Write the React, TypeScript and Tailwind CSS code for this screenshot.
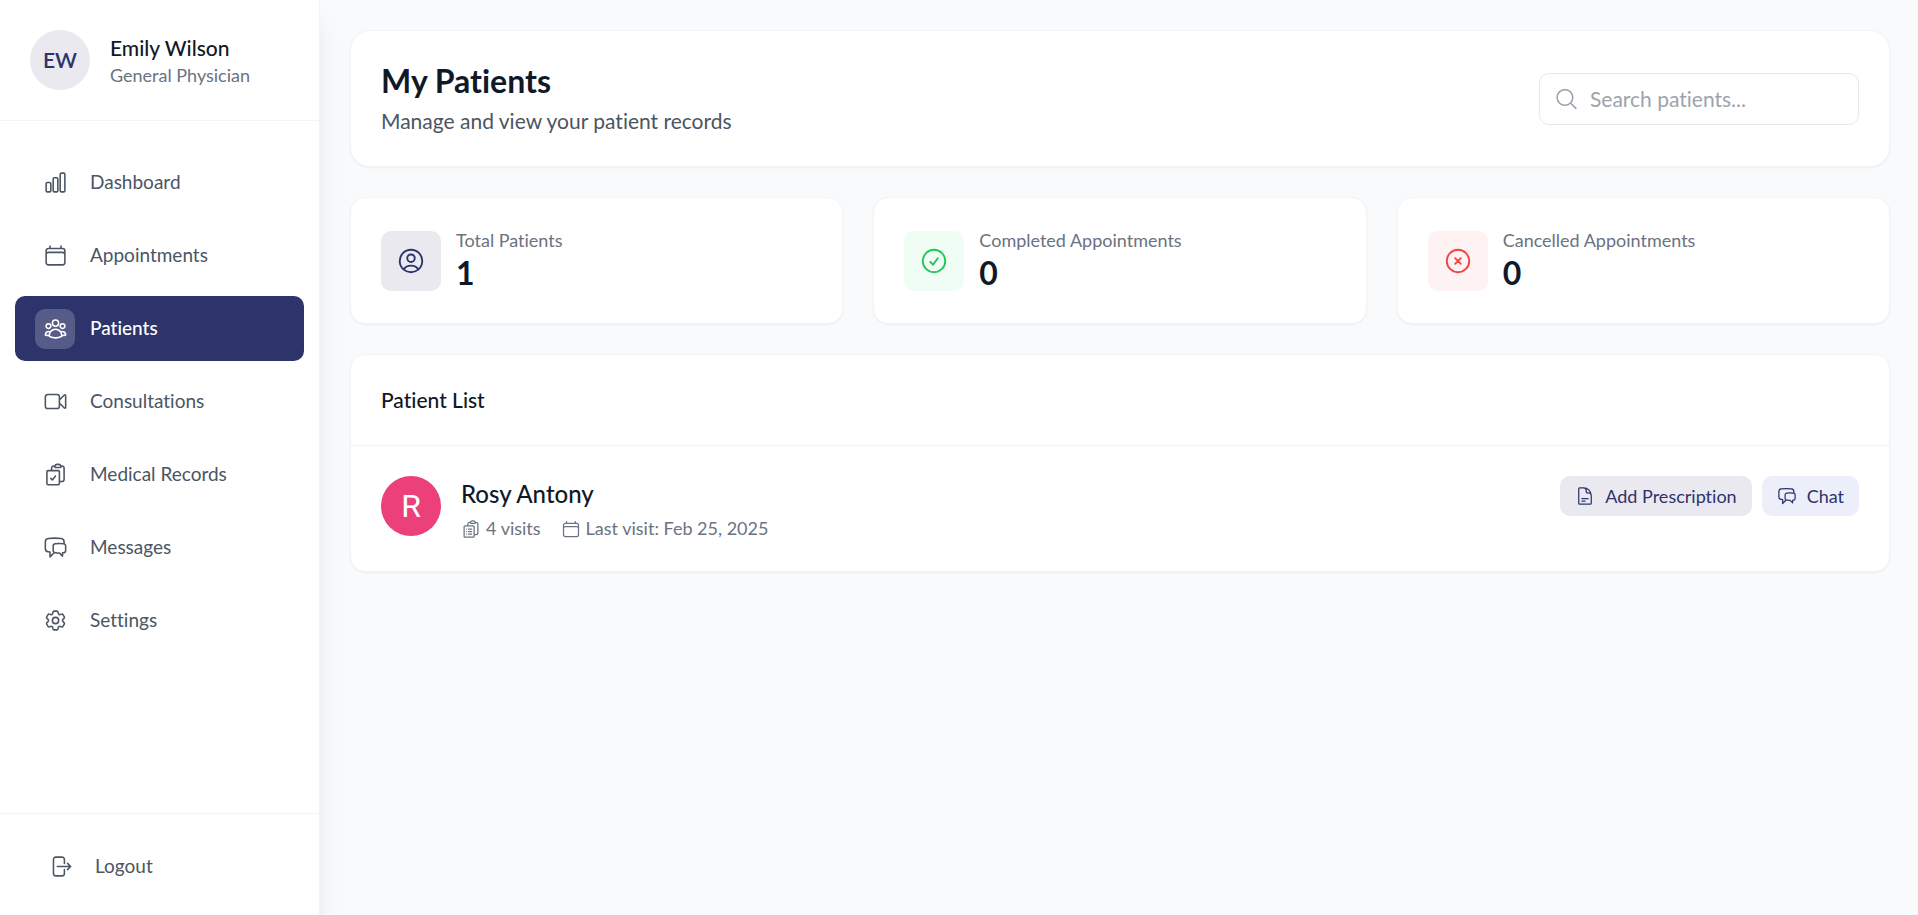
import React from 'react';
import {
  HiOutlineArrowRightOnRectangle,
  HiOutlineCalendar,
  HiOutlineChartBar,
  HiOutlineChatBubbleLeftRight,
  HiOutlineCheckCircle,
  HiOutlineClipboardDocumentCheck,
  HiOutlineClipboardDocumentList,
  HiOutlineCog6Tooth,
  HiOutlineDocumentText,
  HiOutlineMagnifyingGlass,
  HiOutlineUserCircle,
  HiOutlineUserGroup,
  HiOutlineVideoCamera,
  HiOutlineXCircle,
} from 'react-icons/hi2';

const navItems = [
  { name: 'Dashboard', icon: HiOutlineChartBar },
  { name: 'Appointments', icon: HiOutlineCalendar },
  { name: 'Patients', icon: HiOutlineUserGroup, active: true },
  { name: 'Consultations', icon: HiOutlineVideoCamera },
  { name: 'Medical Records', icon: HiOutlineClipboardDocumentCheck },
  { name: 'Messages', icon: HiOutlineChatBubbleLeftRight },
  { name: 'Settings', icon: HiOutlineCog6Tooth },
];

const stats = [
  {
    title: 'Total Patients',
    value: 1,
    icon: HiOutlineUserCircle,
    color: 'text-[#2d336b]',
    bgColor: 'bg-[#ebe9f0]',
  },
  {
    title: 'Completed Appointments',
    value: 0,
    icon: HiOutlineCheckCircle,
    color: 'text-[#22c55e]',
    bgColor: 'bg-[#f0fdf4]',
  },
  {
    title: 'Cancelled Appointments',
    value: 0,
    icon: HiOutlineXCircle,
    color: 'text-[#ef4444]',
    bgColor: 'bg-[#fef2f2]',
  },
];

const patients = [
  { name: 'Rosy Antony', visits: 4, lastVisit: 'Feb 25, 2025' },
];

const Sidebar: React.FC = () => (
  <aside className="z-10 flex w-80 shrink-0 flex-col border-r border-gray-100 bg-white shadow-xl">
    <div className="flex items-center gap-5 border-b border-gray-100 p-[30px]">
      <div className="flex h-[60px] w-[60px] items-center justify-center rounded-full bg-[#ebe9f0] text-[21px] font-semibold text-[#2d336b]">
        EW
      </div>
      <div>
        <h2 className="text-[21px] leading-[30px] font-medium text-[#111827]">Emily Wilson</h2>
        <p className="text-[18px] leading-[25px] text-[#6b7280]">General Physician</p>
      </div>
    </div>

    <nav className="flex flex-1 flex-col gap-2 px-[15px] pt-[29px]">
      {navItems.map((item) => (
        <a
          key={item.name}
          href="#"
          className={`flex h-[65px] items-center gap-[15px] rounded-[10px] px-5 text-[19px] ${
            item.active ? 'bg-[#2d336b] font-medium text-white' : 'text-[#4b5563]'
          }`}
        >
          <span
            className={`flex h-10 w-10 items-center justify-center rounded-[10px] ${
              item.active ? 'bg-white/20' : ''
            }`}
          >
            <item.icon className="h-[25px] w-[25px]" />
          </span>
          {item.name}
        </a>
      ))}
    </nav>

    <div className="border-t border-gray-100 px-5 pt-5 pb-4">
      <button
        type="button"
        className="flex h-[65px] w-full items-center gap-[22px] px-7 text-[19px] text-[#4b5563]"
      >
        <HiOutlineArrowRightOnRectangle className="h-[25px] w-[25px]" />
        Logout
      </button>
    </div>
  </aside>
);

export default function App() {
  return (
    <div className="flex min-h-screen bg-[#f9fafc] font-['Lato',sans-serif] [font-variant-ligatures:none]">
      <Sidebar />

      <main className="flex flex-1 flex-col gap-[30px] py-[30px] pr-7 pl-[30px]">
        {/* Page header */}
        <header className="flex items-center justify-between rounded-[20px] border border-gray-100 bg-white p-[30px] shadow-xs">
          <div>
            <h1 className="text-[32px] leading-10 font-bold text-[#111827]">My Patients</h1>
            <p className="mt-[5px] text-[21px] leading-[30px] text-[#4b5563]">
              Manage and view your patient records
            </p>
          </div>
          <div className="relative w-80">
            <HiOutlineMagnifyingGlass className="absolute top-1/2 left-[15px] h-[25px] w-[25px] -translate-y-1/2 text-[#9ca3af]" />
            <input
              type="text"
              aria-label="Search patients"
              placeholder="Search patients..."
              className="h-[52px] w-full rounded-[10px] border border-gray-200 pr-5 pl-[50px] text-[21px] text-[#111827] placeholder:text-[#9ca3af]"
            />
          </div>
        </header>

        {/* Stats */}
        <div className="grid grid-cols-3 gap-[30px]">
          {stats.map((stat) => (
            <div
              key={stat.title}
              className="flex items-center gap-[15px] rounded-[15px] border border-gray-100 bg-white p-[30px] shadow-xs"
            >
              <div className={`flex h-[60px] w-[60px] items-center justify-center rounded-[10px] ${stat.bgColor}`}>
                <stat.icon className={`h-[30px] w-[30px] ${stat.color}`} />
              </div>
              <div>
                <p className="text-[18px] leading-[25px] text-[#6b7280]">{stat.title}</p>
                <p className="text-[32px] leading-10 font-bold text-[#111827]">{stat.value}</p>
              </div>
            </div>
          ))}
        </div>

        {/* Patient list */}
        <section className="rounded-[15px] border border-gray-100 bg-white shadow-xs">
          <div className="border-b border-gray-100 p-[30px]">
            <h2 className="text-[21px] leading-[30px] font-medium text-[#111827]">Patient List</h2>
          </div>
          {patients.map((patient) => (
            <div key={patient.name} className="flex items-start gap-5 p-[30px]">
              <div className="flex h-[60px] w-[60px] items-center justify-center rounded-full bg-[#ec407a] font-['Roboto',sans-serif] text-[32px] text-white">
                {patient.name[0]}
              </div>
              <div className="flex-1">
                <h3 className="text-[24px] leading-[35px] font-medium text-[#111827]">{patient.name}</h3>
                <div className="mt-[5px] flex items-center gap-5 text-[18px] leading-[25px] text-[#6b7280]">
                  <span className="flex items-center gap-[5px]">
                    <HiOutlineClipboardDocumentList className="h-5 w-5" />
                    {patient.visits} visits
                  </span>
                  <span className="flex items-center gap-[5px]">
                    <HiOutlineCalendar className="h-5 w-5" />
                    Last visit: {patient.lastVisit}
                  </span>
                </div>
              </div>
              <div className="flex gap-[10px]">
                <button
                  type="button"
                  className="flex h-10 items-center gap-[10px] rounded-[10px] bg-[#ebe9f0] px-[15px] text-[18px] text-[#2d336b]"
                >
                  <HiOutlineDocumentText className="h-5 w-5" />
                  Add Prescription
                </button>
                <button
                  type="button"
                  className="flex h-10 items-center gap-[10px] rounded-[10px] bg-[#eceffa] px-[15px] text-[18px] text-[#2d336b]"
                >
                  <HiOutlineChatBubbleLeftRight className="h-5 w-5" />
                  Chat
                </button>
              </div>
            </div>
          ))}
        </section>
      </main>
    </div>
  );
}
